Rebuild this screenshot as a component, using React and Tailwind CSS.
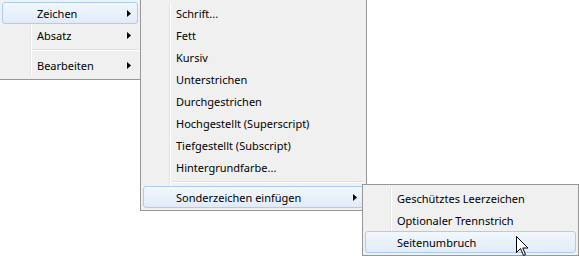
import React from "react";

const Arrow = () => (
  <svg width="4" height="7" viewBox="0 0 4 7" className="block">
    <path d="M0 0 L4 3.5 L0 7 Z" fill="#000" />
  </svg>
);

const Item = ({ label, sub, hot, gutter }) => (
  <div
    className={
      "relative flex h-[22px] items-center rounded-[3px] border " +
      (hot
        ? "border-[#aacdf4] bg-gradient-to-b from-[#f2f7fd] to-[#e1ebf8]"
        : "border-transparent")
    }
  >
    <div style={{ width: gutter }} className="shrink-0" />
    <span className="flex-1 whitespace-nowrap pl-[5px] text-black">{label}</span>
    {sub && (
      <div className="mr-[6px]">
        <Arrow />
      </div>
    )}
  </div>
);

const Sep = ({ gutter }) => (
  <div className="flex h-[8px] items-center">
    <div style={{ width: gutter + 1 }} className="shrink-0" />
    <div className="flex-1">
      <div className="h-px bg-[#e0e0e0]" />
      <div className="h-px bg-white" />
    </div>
  </div>
);

const Menu = ({ className, gutter, children }) => (
  <div
    className={
      "absolute border border-[#979797] bg-[#f0f0f0] p-[2px] " + className
    }
  >
    <div className="relative">
      <div
        className="absolute top-0 bottom-0 w-px bg-[#e2e3e3]"
        style={{ left: gutter - 1 }}
      />
      <div
        className="absolute top-0 bottom-0 w-px bg-white"
        style={{ left: gutter }}
      />
      <div className="relative">{children}</div>
    </div>
  </div>
);

export default function App() {
  return (
    <div
      className="relative h-[256px] w-[579px] overflow-hidden bg-white text-[11px] leading-none"
      style={{ fontFamily: '"Noto Sans", "Open Sans", sans-serif' }}
    >
      {/* Menu 2 */}
      <Menu className="left-[140px] top-[-1px] w-[227px] h-[212px]" gutter={27}>
        <Item gutter={27} label="Schrift..." />
        <Item gutter={27} label="Fett" />
        <Item gutter={27} label="Kursiv" />
        <Item gutter={27} label="Unterstrichen" />
        <Item gutter={27} label="Durchgestrichen" />
        <Item gutter={27} label="Hochgestellt (Superscript)" />
        <Item gutter={27} label="Tiefgestellt (Subscript)" />
        <Item gutter={27} label="Hintergrundfarbe..." />
        <Sep gutter={27} />
        <Item gutter={27} label="Sonderzeichen einfügen" sub hot />
      </Menu>

      {/* Menu 1 */}
      <Menu className="left-[-1px] top-[-1px] w-[142px] h-[81px]" gutter={29}>
        <Item gutter={29} label="Zeichen" sub hot />
        <Item gutter={29} label="Absatz" sub />
        <Sep gutter={29} />
        <Item gutter={29} label="Bearbeiten" sub />
      </Menu>

      {/* Menu 3 */}
      <Menu className="left-[362px] top-[184px] w-[217px] h-[72px]" gutter={26}>
        <Item gutter={26} label="Geschütztes Leerzeichen" />
        <Item gutter={26} label="Optionaler Trennstrich" />
        <Item gutter={26} label="Seitenumbruch" hot />
      </Menu>

      {/* Cursor */}
      <svg
        className="absolute left-[516px] top-[236px]"
        width="13"
        height="21"
        viewBox="0 0 13 21"
      >
        <path
          d="M0.5 0.5 L0.5 16.5 L4.5 12.5 L7.5 19.5 L9.5 18.5 L6.8 12 L12 12 Z"
          fill="#fff"
          stroke="#000"
          strokeWidth="1"
          strokeLinejoin="miter"
        />
      </svg>
    </div>
  );
}
